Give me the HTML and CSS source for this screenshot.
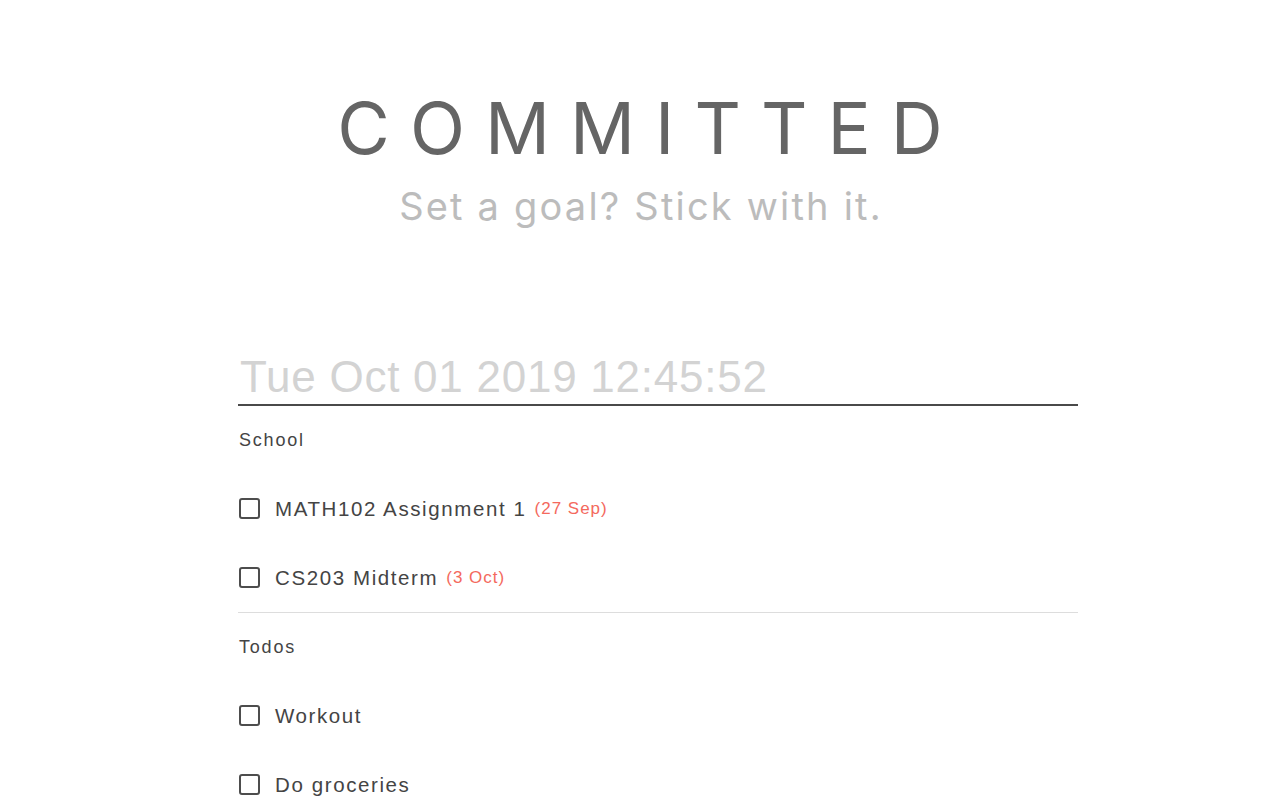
FILE: index.html
```html
<!DOCTYPE html>
<html lang="en">
<head>
<meta charset="utf-8">
<title>Committed</title>
<link rel="stylesheet" href="styles.css">
</head>
<body>
<header class="masthead">
  <h1 class="brand">COMMITTED</h1>
  <p class="tagline">Set a goal? Stick with it.</p>
</header>
<main class="board">
  <div class="clock">Tue Oct 01 2019 12:45:52</div>
  <section class="group">
    <h2 class="group-title">School</h2>
    <ul class="tasks">
      <li class="task"><span class="check"></span><span class="task-name">MATH102 Assignment 1</span><span class="due">(27 Sep)</span></li>
      <li class="task"><span class="check"></span><span class="task-name">CS203 Midterm</span><span class="due">(3 Oct)</span></li>
    </ul>
  </section>
  <section class="group">
    <h2 class="group-title">Todos</h2>
    <ul class="tasks">
      <li class="task"><span class="check"></span><span class="task-name">Workout</span></li>
      <li class="task"><span class="check"></span><span class="task-name">Do groceries</span></li>
    </ul>
  </section>
</main>
</body>
</html>
```
FILE: styles.css
```css
html, body {
  margin: 0;
  padding: 0;
  background: #ffffff;
}
body {
  font-family: "Liberation Sans", Arial, sans-serif;
  color: #444444;
  overflow: hidden;
}
.masthead {
  padding-top: 92px;
  text-align: center;
}
.brand {
  margin: 0;
  font-family: Inter, "Noto Sans", sans-serif;
  font-weight: 400;
  font-size: 72px;
  line-height: 1;
  letter-spacing: 20px;
  padding-left: 20px;
  color: #656565;
}
.tagline {
  margin: 23px 0 0;
  font-family: Inter, "Noto Sans", sans-serif;
  font-weight: 400;
  font-size: 38px;
  line-height: 1;
  letter-spacing: 2.2px;
  padding-left: 2px;
  color: #bcbcbc;
}
.board {
  width: 840px;
  margin: 130px 0 0 238px;
}
.clock {
  font-size: 44px;
  line-height: 1;
  letter-spacing: 0.75px;
  color: #d3d3d3;
  padding: 0 0 5px 2px;
  border-bottom: 2px solid #4a4a4a;
}
.group {
  padding-top: 22px;
  border-bottom: 1px solid #dddddd;
}
.group-title {
  margin: 0 0 22px;
  padding-left: 1px;
  font-size: 18px;
  font-weight: 400;
  line-height: 24px;
  letter-spacing: 1.8px;
  color: #444444;
}
.tasks {
  list-style: none;
  margin: 0;
  padding: 0;
}
.task {
  height: 69px;
  display: flex;
  align-items: center;
}
.check {
  width: 17px;
  height: 17px;
  border: 2px solid #4d4d4d;
  border-radius: 3px;
  margin-left: 1px;
  margin-right: 15px;
  flex: none;
}
.task-name {
  font-size: 20.5px;
  letter-spacing: 1.6px;
  color: #444444;
}
.due {
  margin-left: 8px;
  font-size: 17px;
  letter-spacing: 1px;
  color: #f4695d;
}
```
